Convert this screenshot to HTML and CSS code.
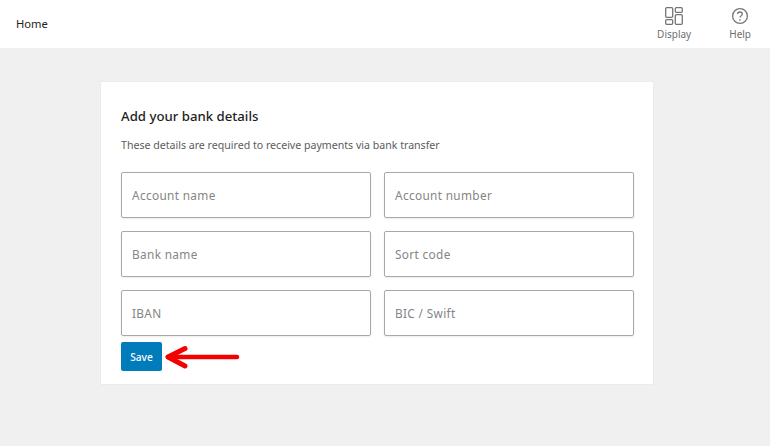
FILE: index.html
```html
<!DOCTYPE html>
<html lang="en">
<head>
    <meta charset="UTF-8">
    <meta name="viewport" content="width=device-width, initial-scale=1.0">
    <title>Bank details</title>
    <link rel="stylesheet" href="styles.css">
</head>
<body>

<header class="topbar">
    <h1 class="page-title">Home</h1>
    <nav class="topbar-actions">
        <div class="action action-display">
            <svg class="action-icon" width="20" height="20" viewBox="0 0 20 20" fill="none" stroke="#757575" stroke-width="1.3">
                <rect x="1.7" y="1.7" width="7" height="9.6" rx="1"/>
                <rect x="1.7" y="13.7" width="7" height="4.6" rx="1"/>
                <rect x="11.3" y="1.7" width="7" height="4.6" rx="1"/>
                <rect x="11.3" y="8.7" width="7" height="9.6" rx="1"/>
            </svg>
            <span>Display</span>
        </div>
        <div class="action action-help">
            <svg class="action-icon" width="20" height="20" viewBox="0 0 20 20" fill="none" stroke="#757575" stroke-width="1.3">
                <circle cx="10" cy="10" r="7.4"/>
                <path d="M7.7 8.1c0-1.3 1-2.1 2.3-2.1s2.3.8 2.3 2c0 1-.6 1.5-1.3 2-.7.4-1 .8-1 1.6"/>
                <circle cx="10" cy="13.9" r=".5" fill="#757575" stroke-width=".6"/>
            </svg>
            <span>Help</span>
        </div>
    </nav>
</header>

<main class="page">
    <section class="card">
        <h2 class="card-title">Add your bank details</h2>
        <p class="card-text">These details are required to receive payments via bank transfer</p>
        <form class="bank-form">
            <div class="field">Account name</div>
            <div class="field">Account number</div>
            <div class="field">Bank name</div>
            <div class="field">Sort code</div>
            <div class="field">IBAN</div>
            <div class="field">BIC / Swift</div>
        </form>
        <div class="save-row">
            <button class="save" type="button">Save</button>
            <!-- red arrow annotation -->
            <svg class="arrow" width="78" height="26" viewBox="0 0 78 26" fill="none" stroke="#f50000" stroke-linecap="round" stroke-linejoin="round">
                <path d="M6 13H75" stroke-width="4.5"/>
                <path d="M23 4.5L6 13L23 22" stroke-width="5"/>
            </svg>
        </div>
    </section>
</main>

</body>
</html>
```

FILE: styles.css
```css
body {
    margin: 0;
    width: 770px;
    height: 446px;
    overflow: hidden;
    background-color: #f0f0f0;
    font-family: "Noto Sans", "Open Sans", sans-serif;
    color: #1e1e1e;
}
.topbar {
    display: flex;
    justify-content: space-between;
    height: 48px;
    background-color: white;
}
.page-title {
    margin: 0;
    padding-left: 16px;
    font-size: 11.2px;
    font-weight: 400;
    line-height: 48px;
    color: #1e1e1e;
}
.topbar-actions {
    display: flex;
    padding-right: 19px;
    gap: 38px;
}
.action {
    display: flex;
    flex-direction: column;
    align-items: center;
    padding-top: 6px;
    font-size: 10px;
    line-height: 14px;
    color: #6f6f6f;
}
.action-icon {
    display: block;
    margin-bottom: 1px;
}
.page {
    padding: 33px 116px 0 100px;
}
.card {
    height: 304px;
    box-sizing: border-box;
    padding: 24px 20px 0;
    background-color: white;
    border: 1px solid #ebebeb;
}
.card-title {
    margin: 0;
    font-size: 13.2px;
    font-weight: 500;
    line-height: 20px;
    color: #1e1e1e;
}
.card-text {
    margin: 10px 0 18px;
    font-size: 10.6px;
    line-height: 18px;
    color: #5c5c5c;
}
.bank-form {
    display: grid;
    grid-template-columns: 250px 250px;
    grid-auto-rows: 45.5px;
    column-gap: 13px;
    row-gap: 13.5px;
}
.field {
    display: flex;
    align-items: center;
    box-sizing: border-box;
    padding: 0 0 0 10px;
    border: 1px solid #a8a8a8;
    border-radius: 2px;
    box-shadow: 0 1px 2px rgba(0, 0, 0, 0.08);
    font-size: 11.8px;
    letter-spacing: 0.35px;
    color: #858585;
}
.save-row {
    display: flex;
    align-items: center;
    margin-top: 6.5px;
}
.save {
    width: 41px;
    height: 29px;
    padding: 0;
    border: none;
    border-radius: 2px;
    background-color: #007cba;
    color: white;
    font-family: inherit;
    font-size: 10.2px;
    font-weight: 500;
}
```
